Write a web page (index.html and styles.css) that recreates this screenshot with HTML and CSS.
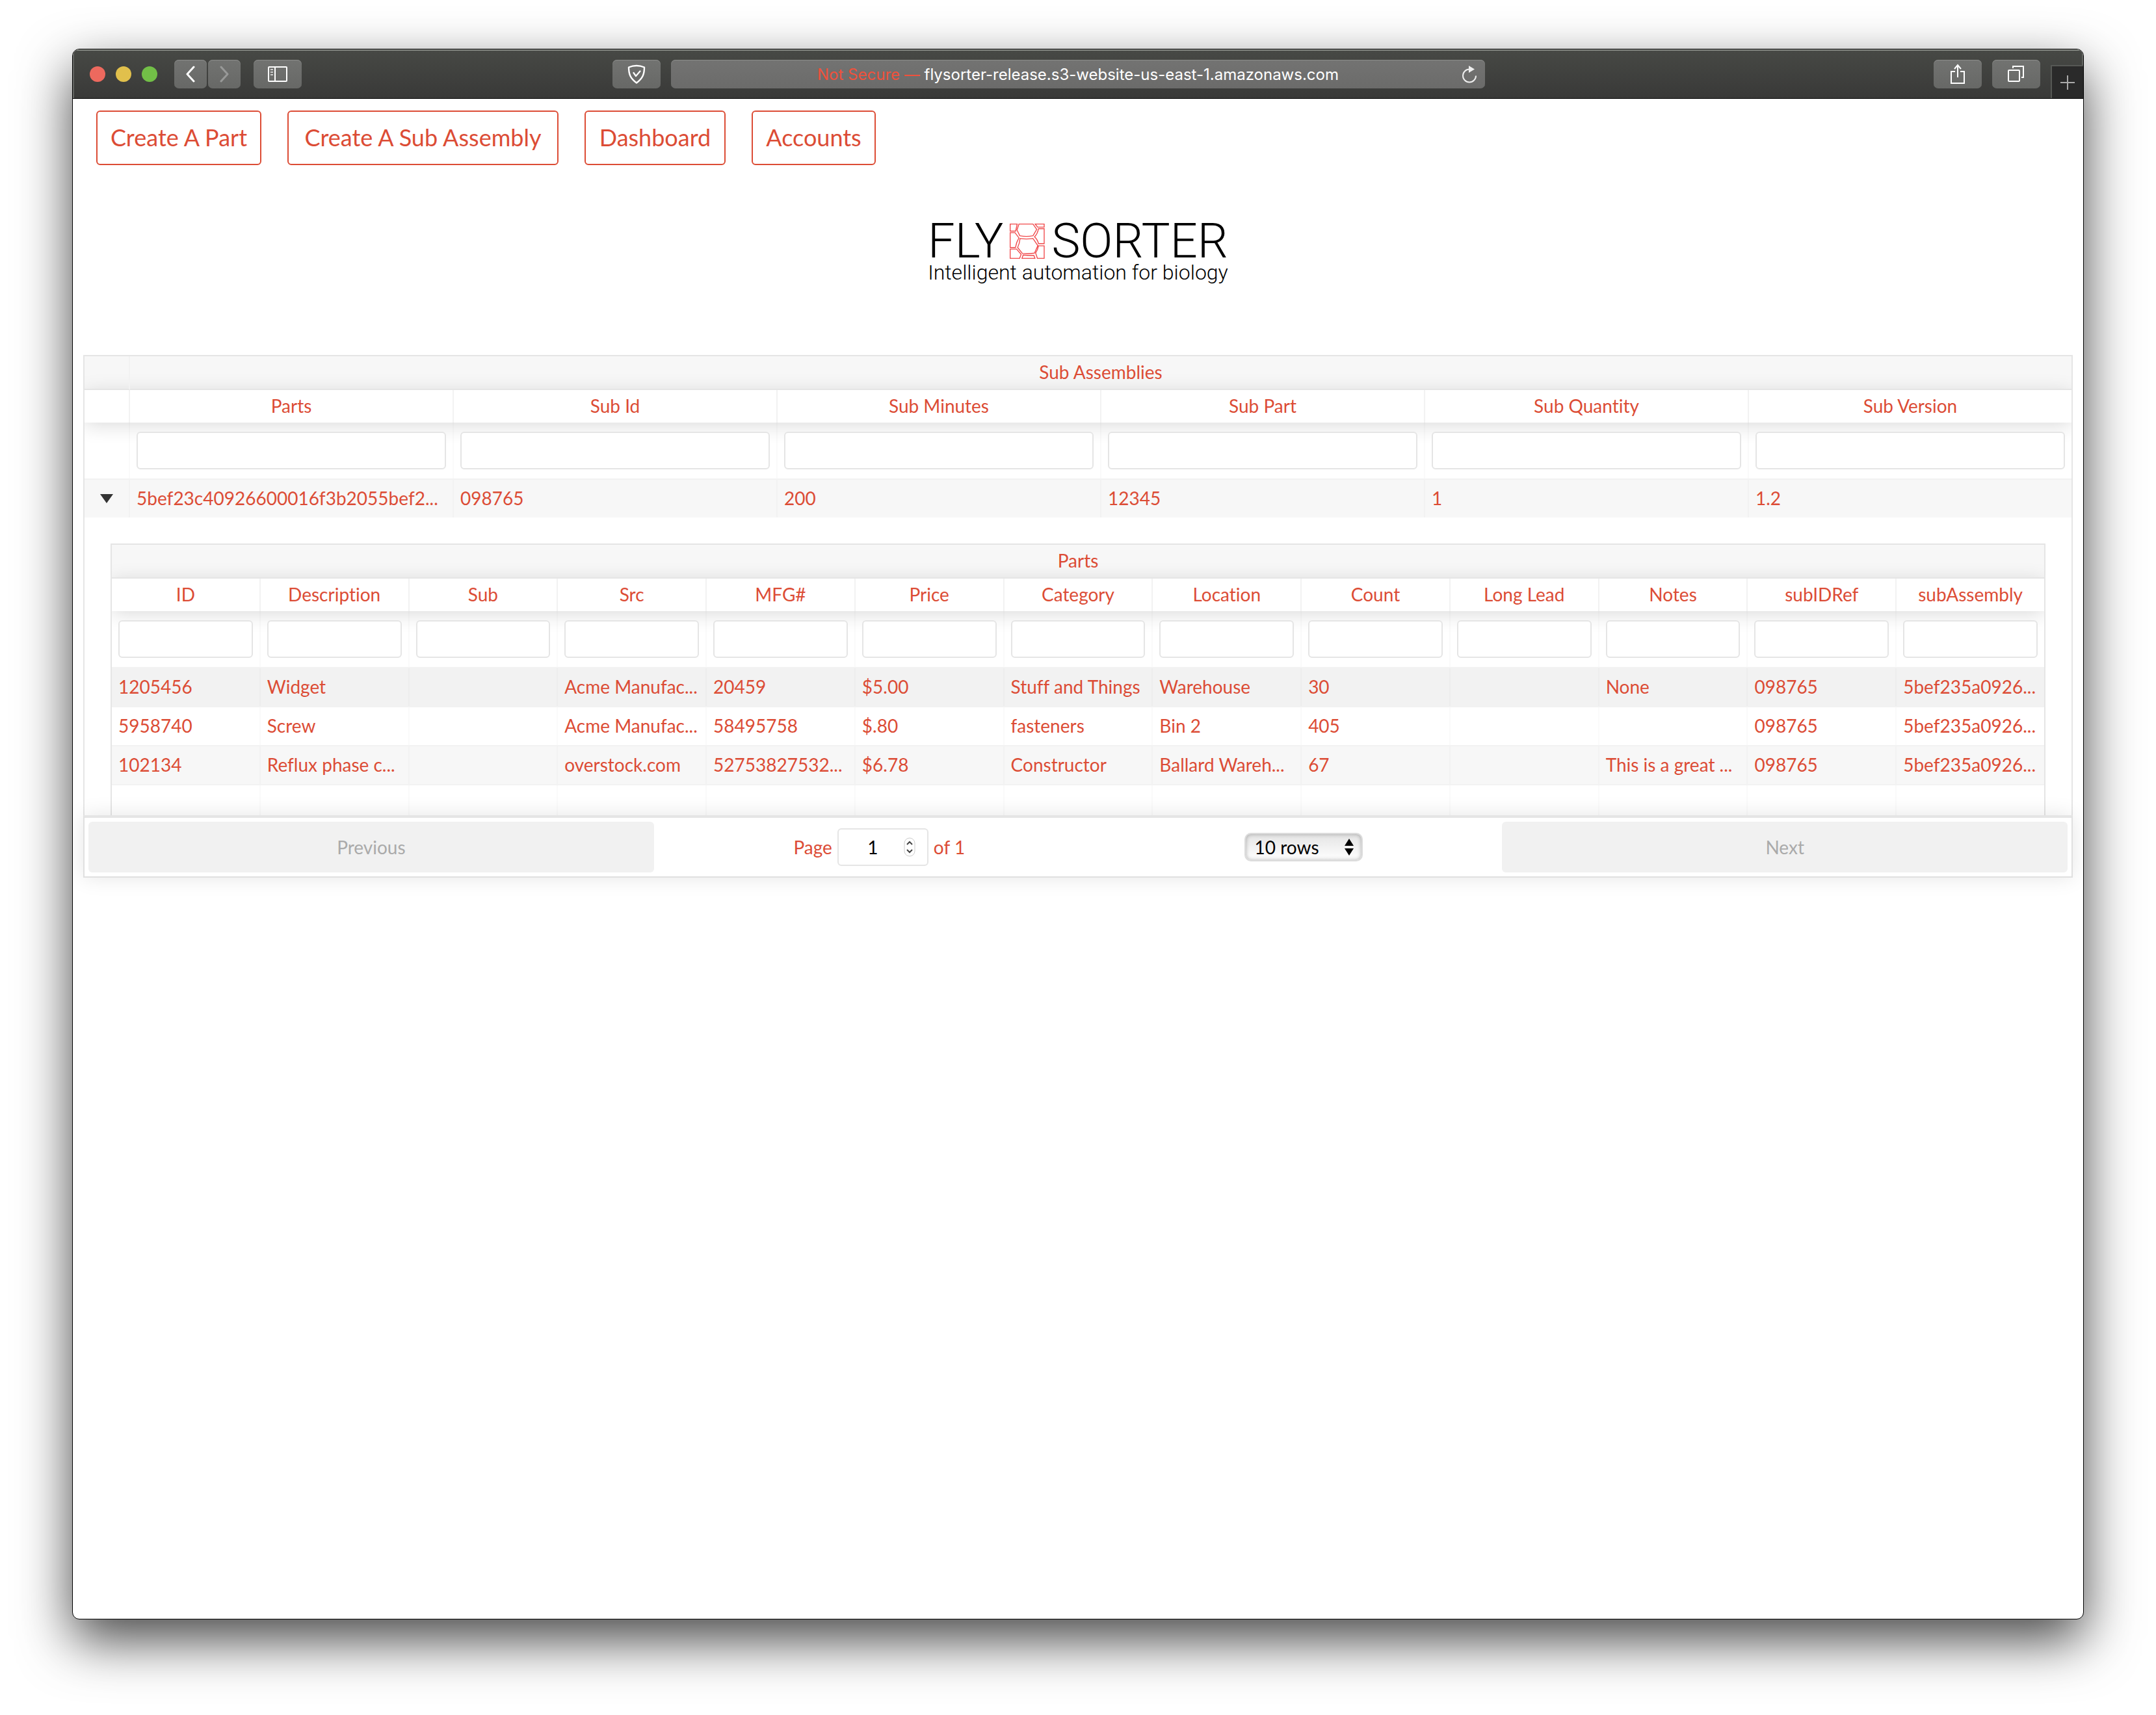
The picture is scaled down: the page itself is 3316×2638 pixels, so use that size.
FILE: index.html
```html
<!DOCTYPE html>
<html lang="en">
<head>
<meta charset="utf-8">
<title>FlySorter</title>
<link rel="stylesheet" href="styles.css">
</head>
<body>
<div class="window">
  <header class="toolbar">
    <div class="toolbar-side">
      <div class="lights"><i class="light red"></i><i class="light yellow"></i><i class="light green"></i></div>
      <div class="history">
        <button class="tool small" aria-label="Back"><svg width="14" height="26" viewBox="0 0 14 26"><path d="M12 2 2 13l10 11" fill="none" stroke="#fff" stroke-width="3" stroke-linecap="round" stroke-linejoin="round"/></svg></button>
        <button class="tool small" aria-label="Forward"><svg width="14" height="26" viewBox="0 0 14 26"><path d="m2 2 10 11L2 24" fill="none" stroke="#989998" stroke-width="3" stroke-linecap="round" stroke-linejoin="round"/></svg></button>
      </div>
      <button class="tool" aria-label="Sidebar"><svg width="30" height="24" viewBox="0 0 30 24"><rect x="1" y="1" width="28" height="22" rx="1" fill="none" stroke="#fff" stroke-width="2"/><path d="M11 1v22" stroke="#fff" stroke-width="2"/><path d="M4 5h4M4 9h4M4 13h4" stroke="#ccc" stroke-width="2"/></svg></button>
      <button class="tool push" aria-label="Privacy report"><svg width="28" height="30" viewBox="0 0 28 30"><path d="M14 2C10 2 5.500 3 2 4.500c0 10 2 16.500 12 24 10-7.500 12-14 12-24C22.500 3 18 2 14 2z" fill="none" stroke="#fff" stroke-width="2.400" stroke-linejoin="round"/><path d="m9.500 13 3.500 5 6.500-7.500" fill="none" stroke="#fff" stroke-width="2.200" stroke-linecap="round" stroke-linejoin="round"/></svg></button>
    </div>
    <div class="address">
      <span class="url"><span class="insecure">Not Secure —</span> flysorter-release.s3-website-us-east-1.amazonaws.com</span>
      <button class="reload" aria-label="Reload"><svg width="24" height="28" viewBox="0 0 24 28"><path d="M12 6.500a10 10 0 1 0 10 10" fill="none" stroke="#eee" stroke-width="2"/><path d="M11 1v11l9-5.500z" fill="#eee"/></svg></button>
    </div>
    <div class="toolbar-side right">
      <button class="tool" aria-label="Share"><svg width="24" height="32" viewBox="0 0 24 32"><path d="M8 12H2v18h20V12h-6M12 21V3M7 8l5-6 5 6" fill="none" stroke="#fff" stroke-width="2"/></svg></button>
      <button class="tool" aria-label="Tab overview"><svg width="26" height="26" viewBox="0 0 26 26"><rect x="1" y="7" width="17" height="17" rx="1" fill="none" stroke="#fff" stroke-width="2"/><path d="M8 4V1h16v17h-3" fill="none" stroke="#fff" stroke-width="2"/></svg></button>
      <button class="newtab" aria-label="New tab"><svg width="22" height="22" viewBox="0 0 22 22"><path d="M11 0v22M0 11h22" stroke="#aaa" stroke-width="2"/></svg></button>
    </div>
  </header>

  <main class="page">
    <nav class="nav">
      <a class="navlink" href="#part">Create A Part</a>
      <a class="navlink" href="#sub">Create A Sub Assembly</a>
      <a class="navlink" href="#dashboard">Dashboard</a>
      <a class="navlink" href="#accounts">Accounts</a>
    </nav>

    <div class="brand">
      <div class="brand-name">
        <span>FLY</span>
        <svg width="54" height="54" viewBox="0 0 160 160" fill="none" stroke="#f0484a" stroke-width="4"><path d="M2 2h32l-7 32H2zM42 2h64l17 24-17 29q-30 6-60 0L33 29zM116 2h41v14h-30zM131 23h26v68h-26q-4-18-18-31 14-14 18-37zM2 41h22l18 24q-12 20-16 44H2zM47 68q29 4 59 0l22 32-15 34q-27 5-55 2L36 109q9-18 11-41zM131 101h26v57h-31l-8-24q10-14 13-33zM2 116h29l21 24-7 18H2zM61 143q25 3 49 2l5 13H56z"/></svg>
        <span>SORTER</span>
      </div>
      <div class="brand-tag">Intelligent automation for biology</div>
    </div>

    <section class="grid">
      <div class="clip">
      <table class="rt">
        <thead class="groups"><tr><th class="expand"></th><th>Sub Assemblies</th></tr></thead>
        <thead class="heads"><tr><th class="expand"></th><th>Parts</th><th>Sub Id</th><th>Sub Minutes</th><th>Sub Part</th><th>Sub Quantity</th><th>Sub Version</th></tr></thead>
        <thead class="filters"><tr><td class="expand"></td><td><input type="text" aria-label="Filter Parts"></td><td><input type="text" aria-label="Filter Sub Id"></td><td><input type="text" aria-label="Filter Sub Minutes"></td><td><input type="text" aria-label="Filter Sub Part"></td><td><input type="text" aria-label="Filter Sub Quantity"></td><td><input type="text" aria-label="Filter Sub Version"></td></tr></thead>
        <tbody>
          <tr class="row odd last"><td class="expand"><button class="expander" aria-label="Collapse row"></button></td><td>5bef23c40926600016f3b2055bef2...</td><td>098765</td><td>200</td><td>12345</td><td>1</td><td>1.2</td></tr>
          <tr class="detail"><td>
            <table class="rt nested">
              <thead class="groups"><tr><th>Parts</th></tr></thead>
              <thead class="heads"><tr><th>ID</th><th>Description</th><th>Sub</th><th>Src</th><th>MFG#</th><th>Price</th><th>Category</th><th>Location</th><th>Count</th><th>Long Lead</th><th>Notes</th><th>subIDRef</th><th>subAssembly</th></tr></thead>
              <thead class="filters"><tr><td><input type="text" aria-label="Filter ID"></td><td><input type="text" aria-label="Filter Description"></td><td><input type="text" aria-label="Filter Sub"></td><td><input type="text" aria-label="Filter Src"></td><td><input type="text" aria-label="Filter MFG#"></td><td><input type="text" aria-label="Filter Price"></td><td><input type="text" aria-label="Filter Category"></td><td><input type="text" aria-label="Filter Location"></td><td><input type="text" aria-label="Filter Count"></td><td><input type="text" aria-label="Filter Long Lead"></td><td><input type="text" aria-label="Filter Notes"></td><td><input type="text" aria-label="Filter subIDRef"></td><td><input type="text" aria-label="Filter subAssembly"></td></tr></thead>
              <tbody>
                <tr class="row active"><td>1205456</td><td>Widget</td><td></td><td>Acme Manufac...</td><td>20459</td><td>$5.00</td><td>Stuff and Things</td><td>Warehouse</td><td>30</td><td></td><td>None</td><td>098765</td><td>5bef235a0926...</td></tr>
                <tr class="row"><td>5958740</td><td>Screw</td><td></td><td>Acme Manufac...</td><td>58495758</td><td>$.80</td><td>fasteners</td><td>Bin 2</td><td>405</td><td></td><td></td><td>098765</td><td>5bef235a0926...</td></tr>
                <tr class="row odd"><td>102134</td><td>Reflux phase c...</td><td></td><td>overstock.com</td><td>52753827532...</td><td>$6.78</td><td>Constructor</td><td>Ballard Wareh...</td><td>67</td><td></td><td>This is a great ...</td><td>098765</td><td>5bef235a0926...</td></tr>
                <tr class="row pad"><td></td><td></td><td></td><td></td><td></td><td></td><td></td><td></td><td></td><td></td><td></td><td></td><td></td></tr>
              </tbody>
            </table>
          </td></tr>
        </tbody>
      </table>
      </div>
      <div class="pagination">
        <button class="pager" disabled>Previous</button>
        <div class="center">
          <div class="pageinfo">
            <label for="page">Page</label>
            <span class="jump"><input id="page" type="number" value="1"><svg class="stepper" width="18" height="30" viewBox="0 0 18 30"><rect x="1" y="1" width="16" height="28" rx="8" fill="#fff" stroke="#ccc"/><path d="m5 11 4-4 4 4M5 19l4 4 4-4" fill="none" stroke="#444" stroke-width="2"/></svg></span>
            <span>of 1</span>
          </div>
          <div class="size">
            <select aria-label="Rows per page"><option>10 rows</option></select>
            <svg class="arrows" width="14" height="26" viewBox="0 0 14 26"><path d="M7 0l7 11H0zM7 26l7-11H0z"/></svg>
          </div>
        </div>
        <button class="pager" disabled>Next</button>
      </div>
    </section>
  </main>
</div>
</body>
</html>
```
FILE: styles.css
```css
* { box-sizing: border-box; }

body {
  margin: 0;
  min-height: 100vh;
  padding: 75px 111px 147px;
  display: flex;
  background: #fff;
  color: #dc4c35;
  font: 28px/28px Lato, "Open Sans", sans-serif;
  font-variant-ligatures: none;
}

button, input, select { font: inherit; margin: 0; }
button { border: 0; padding: 0; }
svg { display: block; flex: none; }

.window {
  flex: 1;
  min-width: 0;
  border: 1px solid #000;
  border-radius: 11px;
  overflow: hidden;
  background: #fff;
  box-shadow: 0 32px 82px rgba(0, 0, 0, .72);
}

/* browser toolbar */
.toolbar {
  display: grid;
  grid-template-columns: 1fr 40.5% 1fr;
  column-gap: 16px;
  align-items: start;
  height: 76px;
  padding-top: 16px;
  border-bottom: 1px solid #000;
  background: linear-gradient(#474945, #393938);
  box-shadow: inset 0 2px #868a84, inset 2px 0 #646663, inset -2px 0 #646663;
}
.toolbar-side { display: flex; align-items: center; }
.toolbar-side.right { justify-content: flex-end; gap: 16px; align-items: flex-start; }
.lights { display: flex; gap: 16px; padding: 0 26px; }
.light { width: 24px; height: 24px; border-radius: 50%; }
.red { background: #ed695e; }
.yellow { background: #e1c04c; }
.green { background: #72bf47; }
.history { display: flex; gap: 2px; margin-right: 20px; }
.tool {
  display: grid;
  place-items: center;
  width: 74px;
  height: 44px;
  border-radius: 7px;
  background: linear-gradient(#727371, #676866);
  box-shadow: inset 0 1px #8b8c8a;
}
.tool.small { width: 50px; }
.push { margin-left: auto; }
.address {
  display: flex;
  align-items: center;
  height: 44px;
  padding: 0 12px;
  border-radius: 7px;
  background: linear-gradient(#737372, #6b6b6a);
  box-shadow: inset 0 1px #8b8c8a;
}
.url {
  flex: 1;
  text-align: center;
  color: #fff;
  font: 24px/30px Inter, sans-serif;
  padding: 2px 0 0 24px;
  white-space: nowrap;
}
.insecure { color: #f0513c; }
.reload { background: none; }
.newtab {
  display: grid;
  place-items: center;
  width: 50px;
  height: 51px;
  margin-top: 8px;
  background: #2a2a2a;
  border: solid #565855;
  border-width: 2px 0 0 2px;
}

/* page */
.page { padding: 18px 16px; }
.nav {
  display: grid;
  grid-template-columns: 254px 417px 217px 191px;
  gap: 40px;
  padding-left: 20px;
}
.navlink {
  height: 84px;
  border: 2px solid #dc4c35;
  border-radius: 6px;
  color: inherit;
  font-size: 36px;
  line-height: 78px;
  text-align: center;
  text-decoration: none;
  white-space: nowrap;
}
.brand {
  display: flex;
  flex-direction: column;
  align-items: center;
  height: 292px;
  padding-top: 82px;
  color: #000;
  font-family: Roboto, sans-serif;
  font-weight: 300;
}
.brand-name { display: flex; align-items: center; gap: 10px; font-size: 74px; line-height: 70px; }
.brand-tag { font-size: 32px; line-height: 26px; }

/* data grid */
.clip { overflow: hidden; border: 2px solid #e5e5e5; border-width: 2px 2px 0; }
.rt, .rt thead, .rt tbody { display: block; }
.rt tr { display: flex; }
.rt th, .rt td {
  flex: 1 1 0;
  min-width: 0;
  padding: 10px;
  overflow: hidden;
  white-space: nowrap;
  text-align: center;
  font-weight: 400;
  border-right: 2px solid #f2f2f2;
}
.rt tr > :last-child { border-right: 0; }
.rt .expand { flex: 0 0 70px; padding: 0; }
.groups { background: #f7f7f7; }
.groups th { height: 52px; border-bottom: 2px solid #e5e5e5; }
.heads { box-shadow: 0 4px 30px rgba(0, 0, 0, .15); }
.heads th { height: 50px; }
.filters tr { height: 88px; border-bottom: 2px solid #f2f2f2; }
.rt .filters td { padding: 14px 10px; border-right-color: rgba(0, 0, 0, .02); }
.filters input {
  display: block;
  width: 100%;
  height: 58px;
  padding: 0 14px;
  border: 2px solid #e5e5e5;
  border-radius: 6px;
  background: #fff;
}
.row { height: 60px; border-bottom: 2px solid #f2f2f2; }
.rt .row td { padding: 14px 10px; text-align: left; border-right-color: rgba(0, 0, 0, .02); }
.odd { background: #f7f7f7; }
.active { background: #f2f2f2; }
.last { height: 58px; border-bottom: 0; }
.pad { height: 46px; border-bottom: 0; }
.rt .row td.expand { display: grid; place-items: center; padding: 0; }
.expander {
  border: solid transparent;
  border-width: 14px 10px 0;
  border-top-color: #333;
  background: none;
}
.rt .detail > td { padding: 40px 40px 0; }
.rt.nested { overflow: hidden; border: 2px solid #e5e5e5; border-bottom: 0; }

/* pagination */
.pagination {
  position: relative;
  z-index: 1;
  display: flex;
  align-items: center;
  padding: 6px;
  border: 2px solid #e0e0e0;
  border-top: 4px solid #e5e5e5;
  background: #fff;
  box-shadow: 0 0 30px rgba(0, 0, 0, .1);
}
.pager {
  flex: 2 1 0;
  height: 78px;
  border-radius: 6px;
  background: #f1f1f1;
  color: #aaa;
}
.center { flex: 3 1 0; display: flex; justify-content: space-around; align-items: center; }
.pageinfo { display: flex; align-items: center; gap: 8px; }
.jump, .size { position: relative; }
.jump input {
  display: block;
  width: 140px;
  height: 58px;
  padding: 0 30px 0 14px;
  border: 2px solid #e5e5e5;
  border-radius: 6px;
  text-align: center;
  color: #000;
  appearance: textfield;
}
.stepper { position: absolute; right: 20px; top: 14px; }
.size select {
  display: block;
  appearance: none;
  width: 182px;
  height: 44px;
  padding: 0 14px;
  border: 2px solid #dcdcdc;
  border-radius: 10px;
  background: linear-gradient(#e4e4e4, #fff);
  box-shadow: inset 0 0 6px rgba(0, 0, 0, .3);
  color: #000;
}
.arrows { position: absolute; right: 14px; top: 9px; pointer-events: none; }
```
